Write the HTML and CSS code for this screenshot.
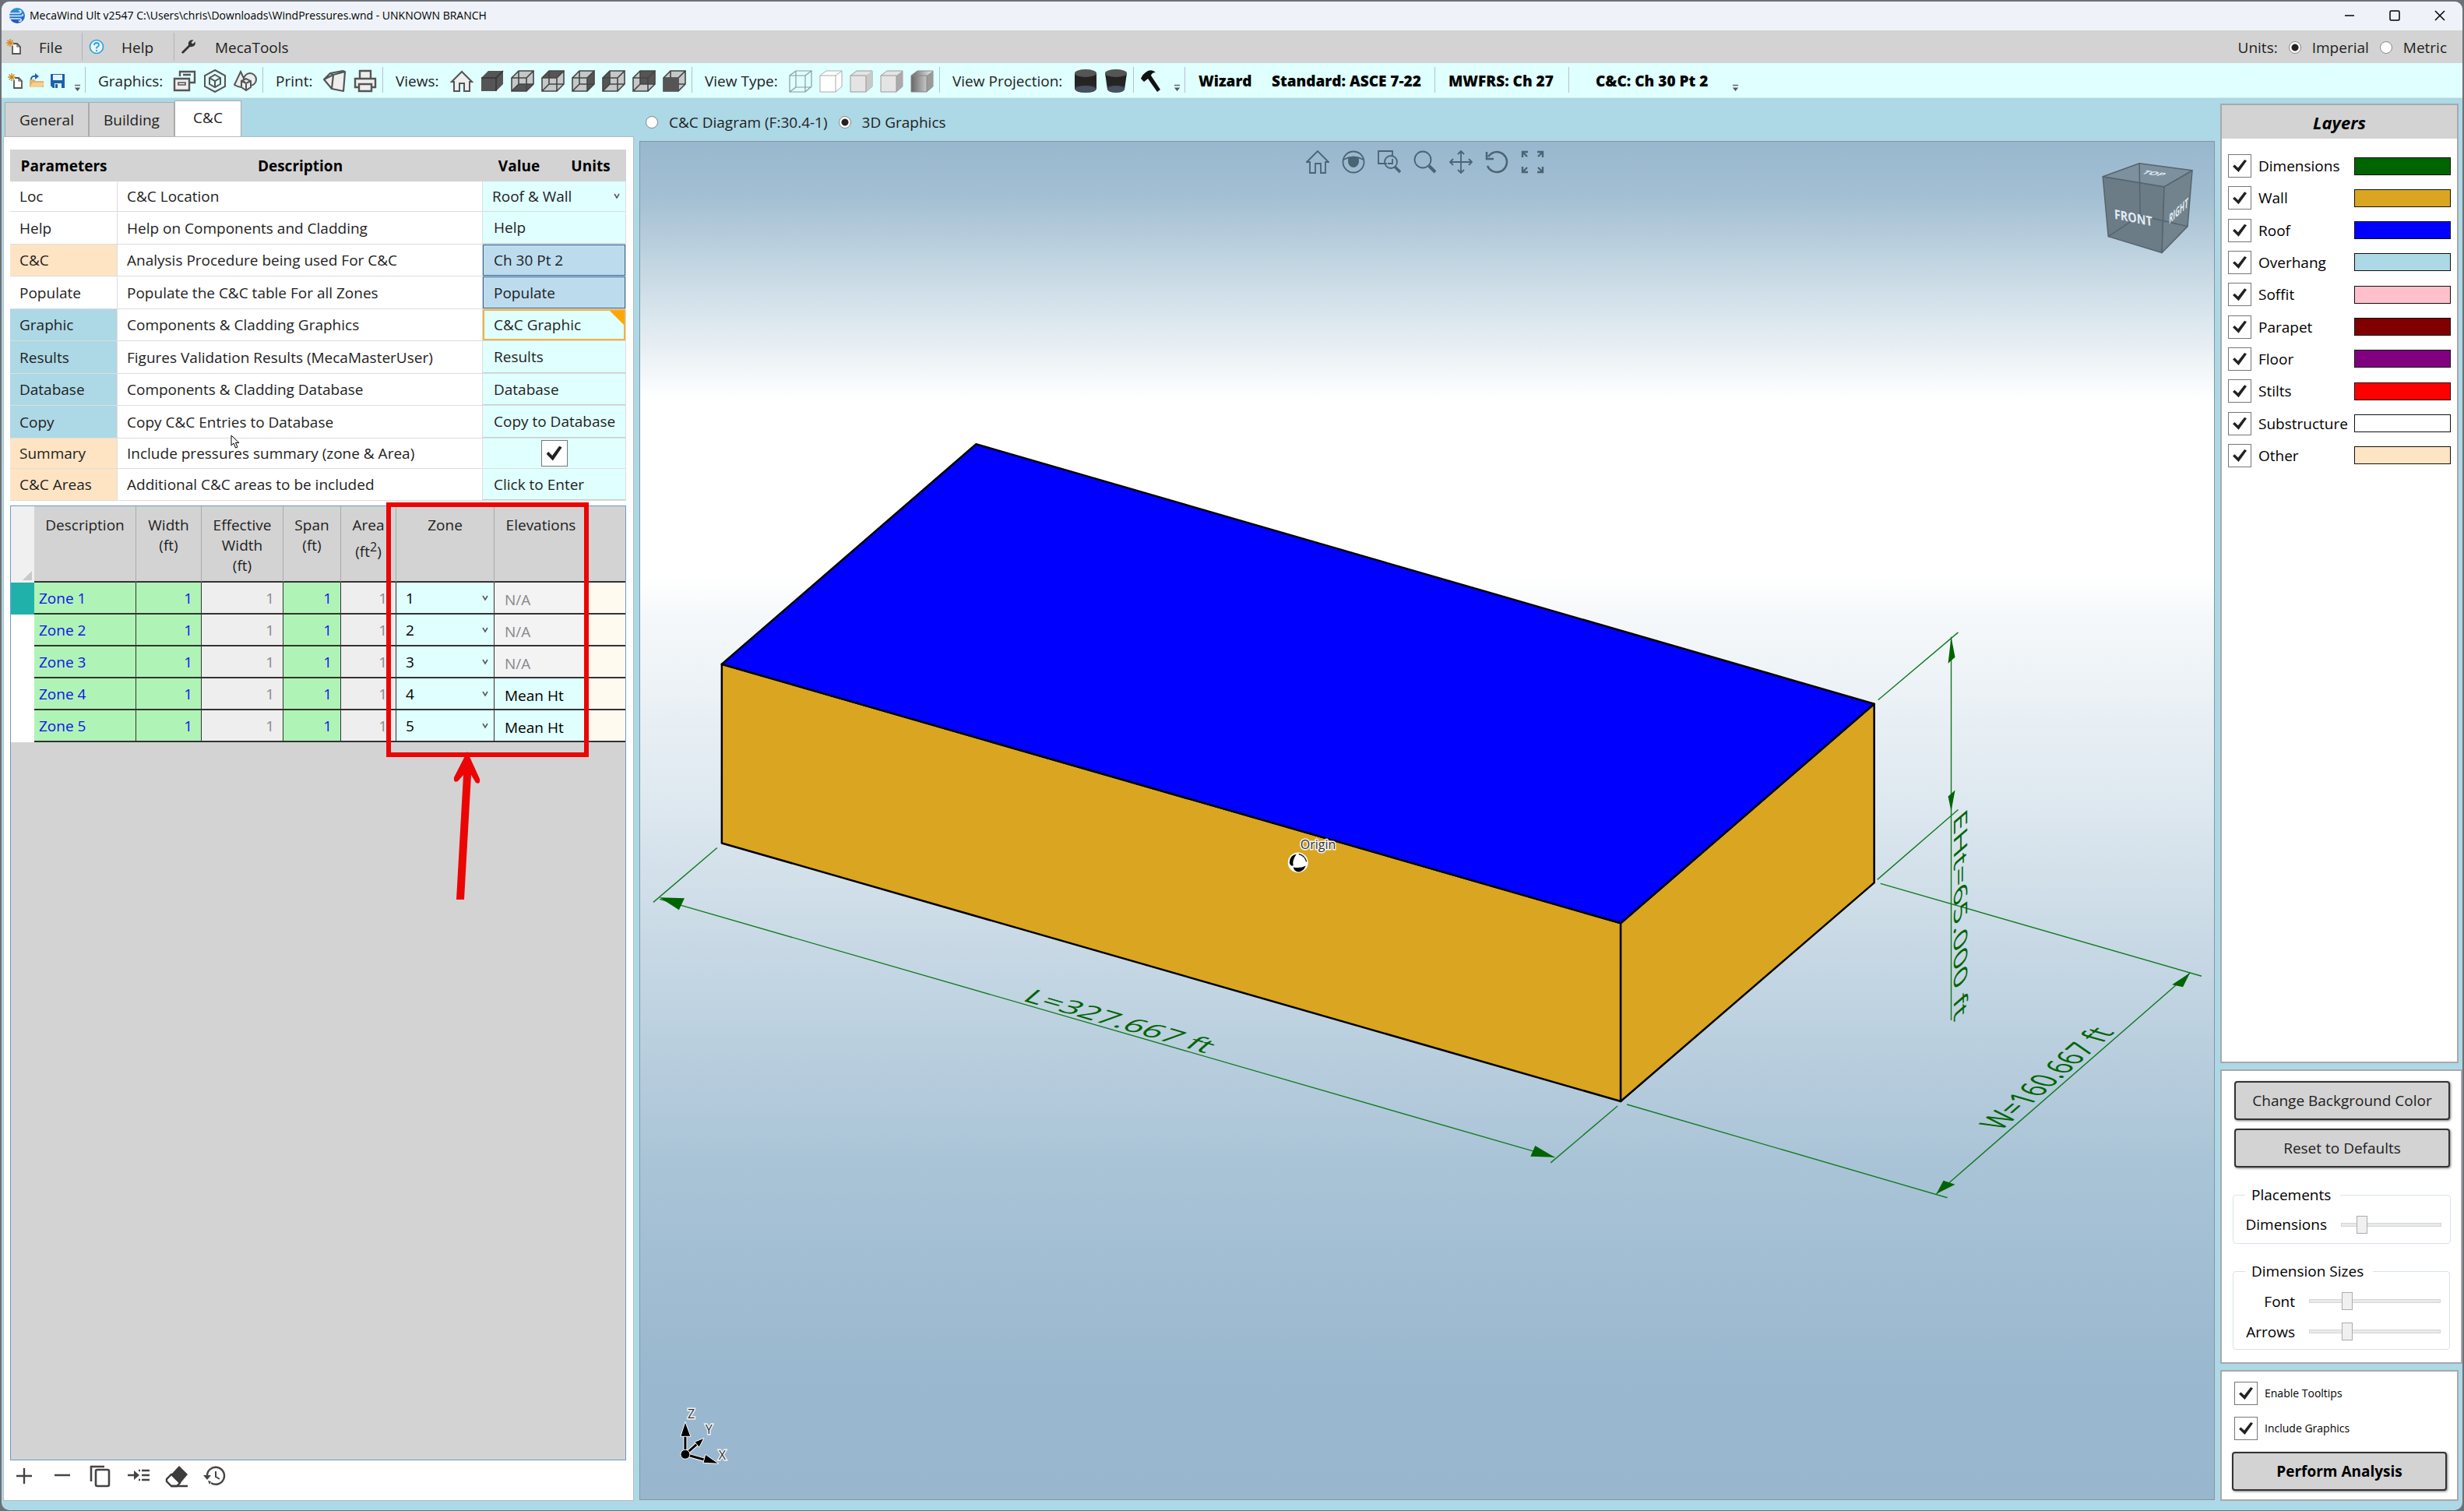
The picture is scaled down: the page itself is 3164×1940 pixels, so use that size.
FILE: index.html
```html
<!DOCTYPE html>
<html lang="en">
<head>
<meta charset="utf-8">
<title>MecaWind Ult v2547</title>
<link rel="stylesheet" href="styles.css">
</head>
<body>
<svg class="defs" aria-hidden="true">
  <defs>
    <symbol id="cube-lines" viewBox="0 0 30 30"><path d="M1 11H20V28H1ZM1 11L10 2H29L20 11M29 2V19L20 28M10 2V19H29M10 19L1 28" fill="none" stroke="#444" stroke-width="1.6"/></symbol>
    <symbol id="overflow" viewBox="0 0 10 12"><path d="M1 1.500H9" stroke="#666" stroke-width="1.500"/><path d="M1 5H9L5 10Z" fill="#555"/></symbol>
    <symbol id="chevron" viewBox="0 0 8 8"><path d="M1 1L4 6L7 1" fill="none" stroke="#555" stroke-width="1.500"/></symbol>
    <symbol id="new-file" viewBox="0 0 20 20"><path d="M9 6H14L18 10V19H8V9" fill="#fff" stroke="#555" stroke-width="1.800"/><path d="M14 6V10H18" fill="none" stroke="#555" stroke-width="1.200"/><path d="M5 0V10M0 5H10M1.500 1.500L8.500 8.500M8.500 1.500L1.500 8.500" stroke="#d08a20" stroke-width="1.400"/></symbol>
    <linearGradient id="shade" x1="0" x2="1"><stop offset="0" stop-color="#666"/><stop offset="1" stop-color="#eee"/></linearGradient>
    <linearGradient id="steel" x1="0" y1="0" x2="0" y2="1"><stop offset="0" stop-color="#222"/><stop offset=".6" stop-color="#252525"/><stop offset="1" stop-color="#455160"/></linearGradient>
    <linearGradient id="brand" x1="0" y1="0" x2="0" y2="1"><stop offset="0" stop-color="#2f9bdc"/><stop offset="1" stop-color="#2050bd"/></linearGradient>
  </defs>
</svg>
<div class="window">
  <header class="titlebar">
    <svg class="app-icon" viewBox="0 0 20 20"><circle cx="10" cy="10" r="10" fill="url(#brand)"/><path d="M0 7H12Q15 7 15 5Q15 3 12 4M0 10.500H15Q18 10.500 17 8M1 14H13Q16 14 15 16.500Q13 18 12 16.500" fill="none" stroke="#dff0ff" stroke-width="1.600"/></svg>
    <h1>MecaWind Ult v2547 C:\Users\chris\Downloads\WindPressures.wnd - UNKNOWN BRANCH</h1>
    <div class="window-buttons">
      <button aria-label="Minimize"><svg viewBox="0 0 14 14"><path d="M1 7H13"/></svg></button>
      <button aria-label="Maximize"><svg viewBox="0 0 14 14"><rect x="1" y="1" width="12" height="12" rx="1.500"/></svg></button>
      <button aria-label="Close"><svg viewBox="0 0 14 14"><path d="M1 1L13 13M13 1L1 13"/></svg></button>
    </div>
  </header>

  <nav class="menubar">
    <button class="menu menu-file"><svg viewBox="0 0 20 20"><use href="#new-file"/></svg><span>File</span></button>
    <button class="menu menu-help"><svg viewBox="0 0 20 20"><circle cx="10" cy="10" r="8.500" fill="#e8f6ff" stroke="#2b9fe0" stroke-width="1.600"/><path d="M7 8Q7 5 10 5T13 8Q13 9.500 10 11V12.500M10 14V16" fill="none" stroke="#2b9fe0" stroke-width="1.800"/></svg><span>Help</span></button>
    <button class="menu menu-tools"><svg viewBox="0 0 20 20"><path d="M2 16L10 8Q9 3 13 1.500Q15 .8 16.500 1.500L13.500 4.500L15.500 6.500L18.500 3.500Q19.500 7 17 9Q15 10.500 12 10L4 18Q2.500 19 1.500 18T2 16Z" fill="#333"/></svg><span>MecaTools</span></button>
    <div class="units">
      <span>Units:</span>
      <label><input type="radio" name="units" checked>Imperial</label>
      <label><input type="radio" name="units">Metric</label>
    </div>
  </nav>

  <div class="toolbar">
    <div class="group g-file">
      <button class="small" aria-label="New"><svg viewBox="0 0 20 20"><use href="#new-file"/></svg></button>
      <button class="small" aria-label="Open"><svg viewBox="0 0 20 20"><path d="M1 18V8H7L9 10H19V18Z" fill="#e5b36a"/><path d="M1 18L5 12H20L17 18Z" fill="#f3cf94"/><path d="M3 8Q3 3 9 4" fill="none" stroke="#1b62a8" stroke-width="2"/><path d="M8 0L13 4L8 8Z" fill="#1b62a8"/></svg></button>
      <button class="small" aria-label="Save"><svg viewBox="0 0 20 20"><path d="M1 1H19V19H4L1 16Z" fill="#1b62a8"/><path d="M4 2H16V9H4ZM6 13H15V19H6Z" fill="#e4f4ff"/><path d="M7 14H10V19H7Z" fill="#1b62a8"/></svg></button>
      <svg class="more" viewBox="0 0 10 12"><use href="#overflow"/></svg>
    </div>
    <div class="group g-graphics">
      <span>Graphics:</span>
      <button aria-label="Windows"><svg viewBox="0 0 30 30"><path d="M9 9V3H28V17H22M13 7H23" fill="none" stroke="#555" stroke-width="2.400"/><path d="M2 12H21V27H2Z" fill="#eee" stroke="#555" stroke-width="2.400"/><path d="M7 17H16V20H7Z" fill="none" stroke="#555" stroke-width="1.600"/></svg></button>
      <button aria-label="3D model"><svg viewBox="0 0 30 30"><g fill="none" stroke="#555" stroke-width="2"><path d="M15 1L28 8V22L15 29L2 22V8Z"/><path d="M15 7L22 11V19L15 23L8 19V11ZM8 11L15 15L22 11M15 15V23"/></g></svg></button>
      <button aria-label="Shapes"><svg viewBox="0 0 30 30"><g fill="#e8eeee" stroke="#555" stroke-width="2"><path d="M9 3L17 20Q11 26 1 20Z"/><circle cx="21" cy="13" r="8"/><path d="M10 15L16 12L22 15V23L16 27L10 23ZM10 15L16 18L22 15M16 18V27"/></g></svg></button>
    </div>
    <div class="group g-print">
      <span>Print:</span>
      <button aria-label="Print view"><svg viewBox="0 0 30 30"><path d="M13 7L28 3L26 28L11 25ZM13 7L1 13L11 25M13 7L9 5L1 13M9 5L25 2L28 3" fill="#eee" stroke="#555" stroke-width="2.200" stroke-linejoin="round"/></svg></button>
      <button aria-label="Print"><svg viewBox="0 0 30 30"><g fill="#eee" stroke="#555" stroke-width="2.400"><path d="M8 12V2H22V12"/><path d="M2 12H28V23H2Z"/><path d="M7 19H23V28H7Z"/></g></svg></button>
    </div>
    <div class="group g-views">
      <span>Views:</span>
      <button aria-label="Home"><svg viewBox="0 0 30 30"><path d="M2 16L15 3L28 16H25V28H18V18H12V28H5V16Z" fill="#eee" stroke="#555" stroke-width="2"/></svg></button>
      <button aria-label="Solid"><svg viewBox="0 0 30 30"><path d="M1 11L10 2H29V19L20 28H1Z" fill="#555"/><path d="M1 11H20V28M20 11L29 2" stroke="#333" stroke-width="1.500" fill="none"/></svg></button>
      <button aria-label="Bottom"><svg viewBox="0 0 30 30"><path d="M1 11L10 2H29V19L20 28H1Z" fill="#c4c8c8"/><path d="M1 28L10 19H29L20 28Z" fill="#555"/><use href="#cube-lines"/></svg></button>
      <button aria-label="Top"><svg viewBox="0 0 30 30"><path d="M1 11L10 2H29V19L20 28H1Z" fill="#c4c8c8"/><path d="M1 11L10 2H29L20 11Z" fill="#555"/><use href="#cube-lines"/></svg></button>
      <button aria-label="Right"><svg viewBox="0 0 30 30"><path d="M1 11L10 2H29V19L20 28H1Z" fill="#c4c8c8"/><path d="M20 11L29 2V19L20 28Z" fill="#555"/><use href="#cube-lines"/></svg></button>
      <button aria-label="Left"><svg viewBox="0 0 30 30"><path d="M1 11L10 2H29V19L20 28H1Z" fill="#c4c8c8"/><path d="M1 11L10 2V19L1 28Z" fill="#555"/><use href="#cube-lines"/></svg></button>
      <button aria-label="Back"><svg viewBox="0 0 30 30"><path d="M1 11L10 2H29V19L20 28H1Z" fill="#c4c8c8"/><path d="M10 2H29V19H10Z" fill="#555"/><use href="#cube-lines"/></svg></button>
      <button aria-label="Front"><svg viewBox="0 0 30 30"><path d="M1 11L10 2H29V19L20 28H1Z" fill="#c4c8c8"/><use href="#cube-lines"/><path d="M1 11H20V28H1Z" fill="#555"/></svg></button>
    </div>
    <div class="group g-type">
      <span>View Type:</span>
      <button aria-label="Wireframe"><svg viewBox="0 0 30 30"><path d="M1 8H21V29H1ZM1 8L9 2H29L21 8M29 2V22L21 29M9 2V23H29M9 23L1 29" fill="none" stroke="#8a9c9c" stroke-width="1.200"/></svg></button>
      <button aria-label="Hidden line"><svg viewBox="0 0 30 30"><path d="M1 8L9 2H29V22L21 29H1Z M1 8H21V29M21 8L29 2" fill="#fff" stroke="#aaa"/></svg></button>
      <button aria-label="Flat"><svg viewBox="0 0 30 30"><path d="M1 8L9 2H29V22L21 29H1Z" fill="#e4e4e4" stroke="#999"/><path d="M21 8L29 2V22L21 29Z" fill="#c8c8c8"/><path d="M1 8H21V29" fill="none" stroke="#999"/></svg></button>
      <button aria-label="Shaded"><svg viewBox="0 0 30 30"><path d="M1 8L9 2H29V22L21 29H1Z" fill="#e4e4e4" stroke="#999"/><path d="M21 8L29 2V22L21 29Z" fill="#aaa"/><path d="M1 8H21V29" fill="none" stroke="#999"/></svg></button>
      <button aria-label="Rendered"><svg viewBox="0 0 30 30"><path d="M1 8L9 2H29V22L21 29H1Z" fill="url(#shade)" stroke="#888"/><path d="M21 8L29 2V22L21 29Z" fill="#999"/><path d="M1 8H21V29" fill="none" stroke="#888"/></svg></button>
    </div>
    <div class="group g-projection">
      <span>View Projection:</span>
      <button aria-label="Parallel"><svg viewBox="0 0 30 30"><path d="M1 5V25Q2 30 15 30T29 25V5Z" fill="url(#steel)"/><ellipse cx="15" cy="5" rx="14" ry="5" fill="#555"/><ellipse cx="15" cy="25" rx="13" ry="4" fill="#46525f"/></svg></button>
      <button aria-label="Perspective"><svg viewBox="0 0 30 30"><path d="M1 5L4 26Q6 30 15 30T26 26L29 5Z" fill="url(#steel)"/><ellipse cx="15" cy="5" rx="14" ry="5" fill="#555"/><ellipse cx="15" cy="25" rx="11" ry="4" fill="#46525f"/></svg></button>
    </div>
    <div class="group g-hammer">
      <button aria-label="Build"><svg viewBox="0 0 30 30"><path d="M1 12Q3 6 10 2Q16 0 20 4Q15 4 14 8L26 26L22 29L10 12L5 16Z" fill="#111"/></svg></button>
      <svg class="more" viewBox="0 0 10 12"><use href="#overflow"/></svg>
    </div>
    <div class="facts f-standard"><b class="wizard">Wizard</b><b>Standard: ASCE 7-22</b></div>
    <div class="facts f-mwfrs"><b>MWFRS: Ch 27</b></div>
    <div class="facts f-cc"><b>C&amp;C: Ch 30 Pt 2</b><svg class="more" viewBox="0 0 10 12"><use href="#overflow"/></svg></div>
  </div>

  <main class="workspace">
    <section class="left">
      <div class="tabs" role="tablist">
        <button role="tab" class="tab t-general">General</button>
        <button role="tab" class="tab t-building">Building</button>
        <button role="tab" class="tab t-cc active" aria-selected="true">C&amp;C</button>
      </div>
      <div class="tab-page">
        <table class="params">
          <colgroup><col class="c-name"><col class="c-desc"><col class="c-value"><col class="c-units"></colgroup>
          <thead><tr><th>Parameters</th><th>Description</th><th>Value</th><th>Units</th></tr></thead>
          <tbody>
            <tr class="compact"><td>Loc</td><td>C&amp;C Location</td><td colspan="2"><div class="combo"><select aria-label="C&amp;C Location"><option>Roof &amp; Wall</option></select><svg viewBox="0 0 8 8"><use href="#chevron"/></svg></div></td></tr>
            <tr class="tall"><td>Help</td><td>Help on Components and Cladding</td><td colspan="2"><button>Help</button></td></tr>
            <tr><td class="peach">C&amp;C</td><td>Analysis Procedure being used For C&amp;C</td><td colspan="2"><button class="selected">Ch 30 Pt 2</button></td></tr>
            <tr class="tall"><td>Populate</td><td>Populate the C&amp;C table For all Zones</td><td colspan="2"><button class="selected">Populate</button></td></tr>
            <tr><td class="blue">Graphic</td><td>Components &amp; Cladding Graphics</td><td colspan="2"><button class="flagged">C&amp;C Graphic</button></td></tr>
            <tr class="tall"><td class="blue">Results</td><td>Figures Validation Results (MecaMasterUser)</td><td colspan="2"><button>Results</button></td></tr>
            <tr><td class="blue">Database</td><td>Components &amp; Cladding Database</td><td colspan="2"><button>Database</button></td></tr>
            <tr class="tall"><td class="blue">Copy</td><td>Copy C&amp;C Entries to Database</td><td colspan="2"><button>Copy to Database</button></td></tr>
            <tr class="compact"><td class="peach">Summary</td><td>Include pressures summary (zone &amp; Area)</td><td colspan="2" class="check-cell"><input type="checkbox" class="check" aria-label="Include pressures summary" checked></td></tr>
            <tr><td class="peach">C&amp;C Areas</td><td>Additional C&amp;C areas to be included</td><td colspan="2"><button>Click to Enter</button></td></tr>
          </tbody>
        </table>
        <div class="zone-grid">
          <table class="zones">
            <colgroup><col class="z-sel"><col class="z-desc"><col class="z-width"><col class="z-eff"><col class="z-span"><col class="z-area"><col class="z-zone"><col class="z-elev"><col></colgroup>
            <thead><tr><th class="corner"><svg viewBox="0 0 12 12"><path d="M12 0V12H0Z" fill="#c9c9c9"/></svg></th><th>Description</th><th>Width<br>(ft)</th><th>Effective<br>Width<br>(ft)</th><th>Span<br>(ft)</th><th>Area<br>(ft<sup>2</sup>)</th><th>Zone</th><th>Elevations</th><th></th></tr></thead>
            <tbody>
              <tr><td class="sel current"></td><td class="in">Zone 1</td><td class="in num">1</td><td class="ro num">1</td><td class="in num">1</td><td class="ro num">1</td><td class="pick"><div class="combo"><select aria-label="Zone 1"><option>1</option></select><svg viewBox="0 0 8 8"><use href="#chevron"/></svg></div></td><td class="na">N/A</td><td class="rest"></td></tr>
              <tr><td class="sel"></td><td class="in">Zone 2</td><td class="in num">1</td><td class="ro num">1</td><td class="in num">1</td><td class="ro num">1</td><td class="pick"><div class="combo"><select aria-label="Zone 2"><option>2</option></select><svg viewBox="0 0 8 8"><use href="#chevron"/></svg></div></td><td class="na">N/A</td><td class="rest"></td></tr>
              <tr><td class="sel"></td><td class="in">Zone 3</td><td class="in num">1</td><td class="ro num">1</td><td class="in num">1</td><td class="ro num">1</td><td class="pick"><div class="combo"><select aria-label="Zone 3"><option>3</option></select><svg viewBox="0 0 8 8"><use href="#chevron"/></svg></div></td><td class="na">N/A</td><td class="rest"></td></tr>
              <tr><td class="sel"></td><td class="in">Zone 4</td><td class="in num">1</td><td class="ro num">1</td><td class="in num">1</td><td class="ro num">1</td><td class="pick"><div class="combo"><select aria-label="Zone 4"><option>4</option></select><svg viewBox="0 0 8 8"><use href="#chevron"/></svg></div></td><td class="elev">Mean Ht</td><td class="rest"></td></tr>
              <tr><td class="sel"></td><td class="in">Zone 5</td><td class="in num">1</td><td class="ro num">1</td><td class="in num">1</td><td class="ro num">1</td><td class="pick"><div class="combo"><select aria-label="Zone 5"><option>5</option></select><svg viewBox="0 0 8 8"><use href="#chevron"/></svg></div></td><td class="elev">Mean Ht</td><td class="rest"></td></tr>
            </tbody>
          </table>
        </div>
        <div class="grid-tools">
          <button aria-label="Add"><svg viewBox="0 0 30 30"><path d="M15 5V25M5 15H25" stroke="#444" stroke-width="2.400"/></svg></button>
          <button aria-label="Remove"><svg viewBox="0 0 30 30"><path d="M5 14H25" stroke="#444" stroke-width="2.600"/></svg></button>
          <button aria-label="Duplicate"><svg viewBox="0 0 30 30"><path d="M3 22V3H20" fill="none" stroke="#444" stroke-width="2.600"/><rect x="9" y="7" width="17" height="21" rx="2" fill="none" stroke="#444" stroke-width="2.600"/></svg></button>
          <button aria-label="Insert"><svg viewBox="0 0 30 30"><path d="M1 14H12M19 8H29M15 8H17M19 14H29M19 20H29M15 20H17" stroke="#444" stroke-width="2.400"/><path d="M9 8L16 14L9 20Z" fill="#444"/></svg></button>
          <button aria-label="Clear"><svg viewBox="0 0 30 30"><path d="M18 2L29 13L18 26L7 14Z" fill="#3c3c3c"/><path d="M8 13L19 24L15 28H8L2 22V19Z" fill="#fff" stroke="#3c3c3c" stroke-width="2.400"/><path d="M8 28H29" stroke="#3c3c3c" stroke-width="2.400"/></svg></button>
          <button aria-label="History"><svg viewBox="0 0 30 30"><path d="M5 15A11 11 0 1 1 10 24" fill="none" stroke="#444" stroke-width="2.400"/><path d="M0 14H10L5 20ZM6 21L10 22L8 26Z" fill="#444"/><path d="M16 9V16L21 19" fill="none" stroke="#444" stroke-width="2"/></svg></button>
        </div>
      </div>
    </section>

    <section class="center">
      <div class="view-choice">
        <label><input type="radio" name="view">C&amp;C Diagram (F:30.4-1)</label>
        <label><input type="radio" name="view" checked>3D Graphics</label>
      </div>
      <div class="viewport">
        <svg class="scene" viewBox="821 181 2024 1744">
          <g stroke="#000" stroke-width="2.500" stroke-linejoin="round">
            <path d="M926 852L2082 1185V1414L926 1082Z" fill="#daa520"/>
            <path d="M2082 1185L2408 903V1133L2082 1414Z" fill="#daa520"/>
            <path d="M1253 569L2408 903L2082 1185L926 852Z" fill="#00f"/>
          </g>
          <g stroke="#127a22" stroke-width="1.400" fill="none">
            <path d="M920 1088L838 1158M2078 1420L1992 1493M846 1154L1997 1486"/>
            <path d="M2090 1418L2502 1538M2416 1134L2829 1253M2488 1533L2814 1249"/>
            <path d="M2413 898L2516 811M2412 1129L2516 1039M2507 817V1310"/>
          </g>
          <g fill="#006400">
            <path d="M846 1152L878 1153L871 1168ZM1997 1486L1966 1485L1972 1471Z"/>
            <path d="M2488 1533L2497 1516L2512 1521ZM2814 1249L2791 1264L2805 1267Z"/>
            <path d="M2507 817L2503 851L2512 843ZM2507 1041L2503 1022L2512 1014Z"/>
            <g class="dim-text">
              <text transform="matrix(.961 .277 -.555 .48 1311 1284)">L=327.667 ft</text>
              <text transform="matrix(.555 -.48 .961 .277 2571 1452)">W=160.667 ft</text>
              <text transform="matrix(0 .973 -.555 .48 2511 1050)">EHt=65.000 ft</text>
            </g>
          </g>
          <g><circle cx="1667" cy="1107" r="13" fill="#fff"/><path d="M1665 1096Q1659 1105 1661 1111Q1657 1112 1656 1107Q1656 1098 1665 1096ZM1661 1113Q1670 1115 1677 1111Q1674 1119 1667 1119Q1662 1118 1661 1113Z" fill="#000"/><path d="M1668 1096Q1676 1098 1678 1106" fill="none" stroke="#222" stroke-width="1.500"/>
          <text class="halo" x="1670" y="1090">Origin</text></g>
          <g stroke="#fff" stroke-width="1" stroke-linejoin="round">
            <path d="M879 1868V1844M879 1868L896 1853M879 1868L904 1875" stroke-width="5" fill="none"/>
            <path d="M879 1868V1844M879 1868L896 1853M879 1868L904 1875" stroke="#000" stroke-width="3" fill="none"/>
            <circle cx="879" cy="1868" r="6"/><path d="M879 1826L886 1845H873ZM922 1880L902 1879L905 1868ZM903 1847L897 1859L891 1852Z"/>
          </g>
          <g class="halo"><text x="882" y="1822">Z</text><text x="905" y="1842">Y</text><text x="922" y="1875">X</text></g>
          <g stroke="#56646e" stroke-width="1.500" stroke-linejoin="round">
            <path d="M2702 225L2781 238L2778 323L2709 302Z" fill="#6b7c87"/><path d="M2781 238L2817 217L2811 289L2778 323Z" fill="#72838e"/><path d="M2702 225L2749 208L2817 217L2781 238Z" fill="#7c909e"/>
            <path d="M2749 208L2750 275L2709 302M2750 275L2811 289" fill="none"/>
          </g>
          <g class="cube-text">
            <text transform="matrix(.9 .18 .05 1.050 2717 279)">FRONT</text>
            <text transform="matrix(.5 -.46 -.04 1.050 2787 286)">RIGHT</text>
            <text transform="matrix(.85 .12 -.6 .35 2751 221)">TOP</text>
          </g>
        </svg>
        <div class="view-tools">
          <button aria-label="Home view"><svg viewBox="0 0 30 30"><path d="M1 15L15 1L29 15H25V29H19V17H12V29H5V15Z"/></svg></button>
          <button aria-label="Look"><svg viewBox="0 0 30 30"><circle cx="15" cy="15" r="13.500"/><path d="M2 12Q15 5 28 12"/><path d="M9 10Q15 8 21 10V16Q19 21 15 21T9 16Z" fill="#4a6474"/></svg></button>
          <button aria-label="Zoom window"><svg viewBox="0 0 30 30"><path d="M12 17H1V1H19V8"/><circle cx="17" cy="15" r="8"/><path d="M22 21L29 28" stroke-width="3.500"/><path d="M13 17H19V11"/></svg></button>
          <button aria-label="Zoom"><svg viewBox="0 0 30 30"><circle cx="12" cy="12" r="10.500"/><path d="M20 20L28 28" stroke-width="4"/></svg></button>
          <button aria-label="Pan"><svg viewBox="0 0 30 30"><path d="M15 1V29M1 15H29M11 5L15 1L19 5M11 25L15 29L19 25M5 11L1 15L5 19M25 11L29 15L25 19"/></svg></button>
          <button aria-label="Rotate"><svg viewBox="0 0 30 30"><path d="M4 8Q9 2 15 2A13 13 0 1 1 3 20M2 2V11H11" stroke-width="2.500"/></svg></button>
          <button aria-label="Zoom extents"><svg viewBox="0 0 30 30"><path d="M2 9V2H9M2 2L8 8M21 2H28V9M28 2L22 8M2 21V28H9M2 28L8 22M28 21V28H21M28 28L22 22" stroke-width="2.400"/></svg></button>
        </div>
      </div>
    </section>

    <aside class="right">
      <section class="panel layers">
        <h2>Layers</h2>
        <ul>
          <li><label><input type="checkbox" class="check" checked>Dimensions</label><span class="swatch dimensions"></span></li>
          <li><label><input type="checkbox" class="check" checked>Wall</label><span class="swatch wall"></span></li>
          <li><label><input type="checkbox" class="check" checked>Roof</label><span class="swatch roof"></span></li>
          <li><label><input type="checkbox" class="check" checked>Overhang</label><span class="swatch overhang"></span></li>
          <li><label><input type="checkbox" class="check" checked>Soffit</label><span class="swatch soffit"></span></li>
          <li><label><input type="checkbox" class="check" checked>Parapet</label><span class="swatch parapet"></span></li>
          <li><label><input type="checkbox" class="check" checked>Floor</label><span class="swatch floor"></span></li>
          <li><label><input type="checkbox" class="check" checked>Stilts</label><span class="swatch stilts"></span></li>
          <li><label><input type="checkbox" class="check" checked>Substructure</label><span class="swatch substructure"></span></li>
          <li><label><input type="checkbox" class="check" checked>Other</label><span class="swatch other"></span></li>
        </ul>
      </section>
      <section class="panel options">
        <button class="push">Change Background Color</button>
        <button class="push">Reset to Defaults</button>
        <fieldset class="placements">
          <legend>Placements</legend>
          <label><span>Dimensions</span><input type="range" min="0" max="100" value="17"></label>
        </fieldset>
        <fieldset class="sizes">
          <legend>Dimension Sizes</legend>
          <label><span>Font</span><input type="range" min="0" max="100" value="27"></label>
          <label><span>Arrows</span><input type="range" min="0" max="100" value="27"></label>
        </fieldset>
      </section>
      <section class="panel run">
        <label><input type="checkbox" class="check" checked>Enable Tooltips</label>
        <label><input type="checkbox" class="check" checked>Include Graphics</label>
        <button class="push strong">Perform Analysis</button>
      </section>
    </aside>
  </main>

  <svg class="callout" viewBox="0 0 264 512" aria-hidden="true"><rect x="3" y="3" width="254" height="321" fill="none" stroke="#eb0505" stroke-width="6"/><path d="M90 510L99 350L92 358Q86 361 87 353L104 320L120 355Q121 363 115 360L109 350L100 510Z" fill="#eb0505"/></svg>
  <svg class="pointer" viewBox="0 0 12 18" aria-hidden="true"><path d="M1 1V14L4 11L6.500 17L9 16L6.500 10.500H11Z" fill="#fff" stroke="#000"/></svg>
</div>
</body>
</html>
```

FILE: styles.css
```css
* { box-sizing: border-box; }

body {
  margin: 0;
  background: #6d7076;
  color: #1e1e1e;
  font-family: "Open Sans", "Noto Sans", sans-serif;
  font-size: 19px;
  line-height: 26px;
}

button, select, input { font: inherit; color: inherit; margin: 0; }
button { border: 0; padding: 0; background: none; }
svg { display: block; }
.defs { position: absolute; width: 0; height: 0; }

.window {
  position: relative;
  display: flex;
  flex-direction: column;
  min-height: calc(100vh - 3px);
  margin: 2px 2px 1px;
  border-radius: 10px;
  overflow: hidden;
  background: #add8e6;
}

/* title bar */
.titlebar {
  display: flex;
  align-items: center;
  gap: 6px;
  height: 37px;
  padding: 0 22px 2px 10px;
  background: #eff3f9;
}
.titlebar h1 { margin: 0; font-size: 14px; font-weight: 400; color: #000; }
.app-icon { width: 20px; height: 20px; }
.window-buttons { display: flex; gap: 44px; margin-left: auto; }
.window-buttons svg { width: 14px; height: 14px; fill: none; stroke: #000; stroke-width: 1.500; }

/* menu bar */
.menubar { display: flex; height: 42px; padding: 3px 0; background: #d3d3d3; }
.menu { display: flex; align-items: center; border-right: 1px solid #aeb4bf; }
.menu svg { width: 20px; height: 20px; }
.menu span, .units { padding-top: 2px; }
.menu-file { width: 104px; padding-left: 6px; gap: 22px; }
.menu-help { width: 118px; padding-left: 8px; gap: 22px; }
.menu-tools { padding-left: 8px; gap: 24px; border-right: 0; }
.units { display: flex; align-items: center; gap: 14px; margin-left: auto; padding-right: 20px; }
.units label { display: flex; align-items: center; gap: 14px; }

input[type="radio"] {
  appearance: none;
  width: 16px;
  height: 16px;
  border: 1px solid #888;
  border-radius: 50%;
  background: #fff;
}
input[type="radio"]:checked { background: radial-gradient(circle, #222 0 4px, #fff 5px); }

/* toolbar */
.toolbar { display: flex; height: 45px; background: #e0ffff; border-bottom: 1px solid #cfeef2; }
.group, .facts { position: relative; display: flex; align-items: center; margin: 5px 0 6px; padding-top: 3px; border-right: 1px solid #b5c2cc; }
.group { gap: 9px; padding-left: 16px; padding-right: 7px; }
.group span { margin-right: auto; white-space: nowrap; }
.group button svg { width: 30px; height: 30px; }
.group .small svg { width: 20px; height: 20px; }
.more { position: absolute; right: 5px; bottom: 0; width: 9px; height: 11px; }
.g-file { width: 108px; padding-left: 8px; gap: 7px; }
.g-graphics { width: 228px; }
.g-print { width: 154px; }
.g-views { width: 397px; }
.g-type { width: 318px; }
.g-projection { width: 249px; }
.g-hammer { width: 66px; padding-left: 8px; }
.facts { color: #000; font-weight: 700; padding-left: 17px; white-space: nowrap; }
.f-standard { width: 321px; }
.wizard { width: 94px; }
.f-mwfrs { width: 172px; }
.f-cc { width: 218px; padding-left: 34px; border-right: 0; }
.f-cc .more { right: 0; }

/* workspace */
.workspace { flex: 1; display: grid; grid-template-columns: 812px minmax(0, 1fr) 311px; gap: 7px; }
.left { display: flex; flex-direction: column; padding: 3px 0 12px 2px; }
.tabs { display: flex; align-items: flex-end; height: 46px; padding-left: 2px; }
.tab { height: 44px; border: 1px solid #aaa; border-bottom: 0; background: #d3d3d3; }
.tab.active { height: 46px; padding-bottom: 4px; background: #fff; }
.t-general { width: 108px; }
.t-building { width: 110px; }
.t-cc { width: 86px; }
.tab-page {
  flex: 1;
  display: flex;
  flex-direction: column;
  padding: 16px 9px 0 8px;
  border: 1px solid #b5bcc0;
  background: #fff;
}

table { width: 100%; table-layout: fixed; border-spacing: 0; }
th { font-weight: 400; }
td, th { padding: 0; }

/* parameter table */
.params .c-name { width: 138px; }
.params .c-value { width: 93px; }
.params .c-units { width: 91px; }
.params th { height: 39px; background: #d3d3d3; color: #000; font-weight: 700; }
.params tr { height: 41px; }
.params tr.compact { height: 39px; }
.params tr.tall { height: 42px; }
.params td { border-right: 1px solid #ddd; border-bottom: 1px solid #ddd; padding-left: 12px; white-space: nowrap; }
.params td:nth-child(3) { height: 1px; padding: 0; background: #e0ffff; }
.params td.peach { background: #ffe4c4; }
.params td.blue { background: #add8e6; }
.params td button { position: relative; display: block; width: 100%; height: 100%; padding-left: 14px; text-align: left; overflow: hidden; border-bottom: 1px solid #ccc; }
.params .selected { border: 1px solid #2f6597; background: #bcdcee; padding-left: 13px; }
.params .flagged { border: 2px solid #f5b13c; padding-left: 12px; }
.flagged::after { content: ""; position: absolute; top: 0; right: 0; border-top: 18px solid #ffa500; border-left: 18px solid transparent; }
.params .check-cell { text-align: center; }

.combo { display: grid; align-items: center; height: 100%; }
.combo > * { grid-area: 1 / 1; }
.combo select { appearance: none; width: 100%; height: 100%; padding: 0 12px; border: 0; background: none; }
.combo svg { justify-self: end; width: 8px; height: 8px; margin-right: 7px; pointer-events: none; }

.check {
  appearance: none;
  display: inline-grid;
  place-items: center;
  flex: none;
  width: 30px;
  height: 30px;
  border: 1px solid #777;
  background: #fff;
  vertical-align: middle;
}
.check:checked::before {
  content: "";
  width: 18px;
  height: 16px;
  background: #222;
  clip-path: polygon(0 54%, 14% 40%, 38% 66%, 84% 0, 100% 10%, 42% 100%);
}
.check-cell .check { width: 34px; height: 34px; }
.check-cell .check::before { width: 20px; height: 19px; }

/* zone grid */
.zone-grid { flex: 1; margin-top: 6px; border: 1px solid #6f9cc6; background: #d3d3d3; }
.z-sel { width: 30px; }
.z-desc { width: 131px; }
.z-width { width: 84px; }
.z-eff { width: 105px; }
.z-span { width: 74px; }
.z-area { width: 71px; }
.z-zone { width: 126px; }
.z-elev { width: 120px; }
.zones th { height: 98px; padding-top: 11px; vertical-align: top; border-right: 1px solid #aaa; border-bottom: 2px solid #333; }
.zones th:last-child { border-right: 0; }
.zones .corner { padding: 0 3px 3px 0; vertical-align: bottom; background: #f0f0f0; border: 0; }
.corner svg { width: 12px; height: 12px; margin-left: auto; }
.zones sup { font-size: 16px; line-height: 30px; }
.zones tr { height: 41px; }
.zones td { border-right: 1px solid #333; border-bottom: 2px solid #333; }
.zones .sel { background: #fff; border: 0; }
.zones .current { background: #20b2aa; }
.zones .in { padding-left: 6px; background: #aff4b6; color: #1010ee; }
.zones .ro { background: #eee; color: #888; }
.zones .num { padding: 0 11px 0 0; text-align: right; }
.zones .pick { height: 1px; background: #e0ffff; color: #000; }
.zones .na { padding: 4px 0 0 13px; background: #f3f3f3; color: #888; }
.zones .elev { padding: 4px 0 0 13px; background: #e0ffff; color: #000; }
.zones .rest { background: #fffaf0; border-right: 0; }

.grid-tools { display: flex; align-items: flex-start; gap: 19px; height: 51px; padding: 5px 0 0 3px; }
.grid-tools svg { width: 30px; height: 30px; }

/* 3D view */
.center { display: flex; flex-direction: column; padding-bottom: 13px; }
.view-choice { display: flex; align-items: center; gap: 14px; height: 55px; padding: 7px 0 0 8px; }
.view-choice label { display: flex; align-items: center; gap: 14px; }
.viewport {
  position: relative;
  flex: 1;
  border: 1px solid #84969f;
  background: linear-gradient(#98b7ce 0%, #a3bfd3 4%, #cfdee8 11%, #fff 19%, #fff 32%, #f5f8fa 35%, #dfe9f0 48%, #c8d9e5 59%, #aac4d7 75%, #9ab8cf 90%, #98b7ce 100%);
}
.scene { position: absolute; inset: 0; width: 100%; height: 100%; }
.dim-text { font-size: 43px; }
.halo { font-size: 16px; fill: #333; stroke: #f4f4f4; stroke-width: 3px; paint-order: stroke; }
.cube-text { font-size: 16px; font-weight: 700; fill: #e3edf4; }
.view-tools { position: relative; display: flex; justify-content: center; gap: 16px; padding-top: 11px; margin-right: 6px; }
.view-tools svg { width: 30px; height: 30px; fill: none; stroke: #4a6474; stroke-width: 1.800; }

/* right column */
.right { display: flex; flex-direction: column; gap: 8px; padding: 7px 0 12px; color: #000; }
.panel { border: 2px solid #a9a9a9; background: #fff; }
.layers { flex: 1; margin-right: 5px; }
.layers h2 { margin: 0 0 20px; height: 43px; line-height: 44px; background: #d3d3d3; text-align: center; font-size: 22px; font-style: italic; font-weight: 700; }
.layers ul { display: grid; align-content: space-between; height: 402px; margin: 0; padding: 0 8px; list-style: none; }
.layers li { display: flex; align-items: center; justify-content: space-between; }
.layers label, .run label { display: flex; align-items: center; gap: 9px; }
.layers label { font-weight: 500; }
.swatch { width: 124px; height: 23px; border: 1px solid #111; }
.dimensions { background: #006400; }
.wall { background: #daa520; }
.roof { background: #00f; }
.overhang { background: #add8e6; }
.soffit { background: #ffc0cb; }
.parapet { background: #800000; }
.floor { background: #800080; }
.stilts { background: #f00; }
.substructure { background: #fff; }
.other { background: #ffe4c4; }

.push {
  display: block;
  width: 100%;
  height: 50px;
  border: 2px solid #333;
  border-radius: 4px;
  background: #d3d3d3;
  box-shadow: 1px 1px 3px #777;
  color: #1e1e1e;
}
.strong { color: #000; font-weight: 700; }
.options { height: 378px; padding: 13px 14px 0; }
.options .push { width: 277px; margin: 0 0 11px 2px; }
fieldset { margin: 0; padding: 3px 11px 0; border: 1px solid #d8e2ea; border-radius: 4px; }
legend { margin-left: 4px; padding: 0 12px 0 8px; }
fieldset label { display: flex; align-items: center; gap: 18px; }
fieldset label span { flex: none; text-align: right; }
.placements { margin-top: 22px; height: 76px; }
.placements label { height: 44px; }
.placements label span { width: 109px; }
.sizes { margin-top: 22px; padding-top: 6px; height: 114px; }
.sizes label { height: 39px; }
.sizes label span { width: 68px; }
input[type="range"] { appearance: none; flex: 1; min-width: 0; height: 24px; background: none; }
input[type="range"]::-webkit-slider-runnable-track { height: 5px; border: 1px solid #d6d6d6; background: #e7eaea; }
input[type="range"]::-webkit-slider-thumb { appearance: none; width: 14px; height: 23px; margin-top: -10px; border: 1px solid #acacac; background: #f0f0f0; }

.run { height: 168px; margin-right: 5px; padding: 13px 13px 0; font-size: 14px; }
.run label { height: 30px; margin: 0 0 15px 3px; }
.run .push { font-size: 19px; }

/* overlays */
.callout { position: absolute; left: 494px; top: 643px; width: 264px; height: 512px; pointer-events: none; }
.pointer { position: absolute; left: 294px; top: 556px; width: 12px; height: 18px; pointer-events: none; }
```
